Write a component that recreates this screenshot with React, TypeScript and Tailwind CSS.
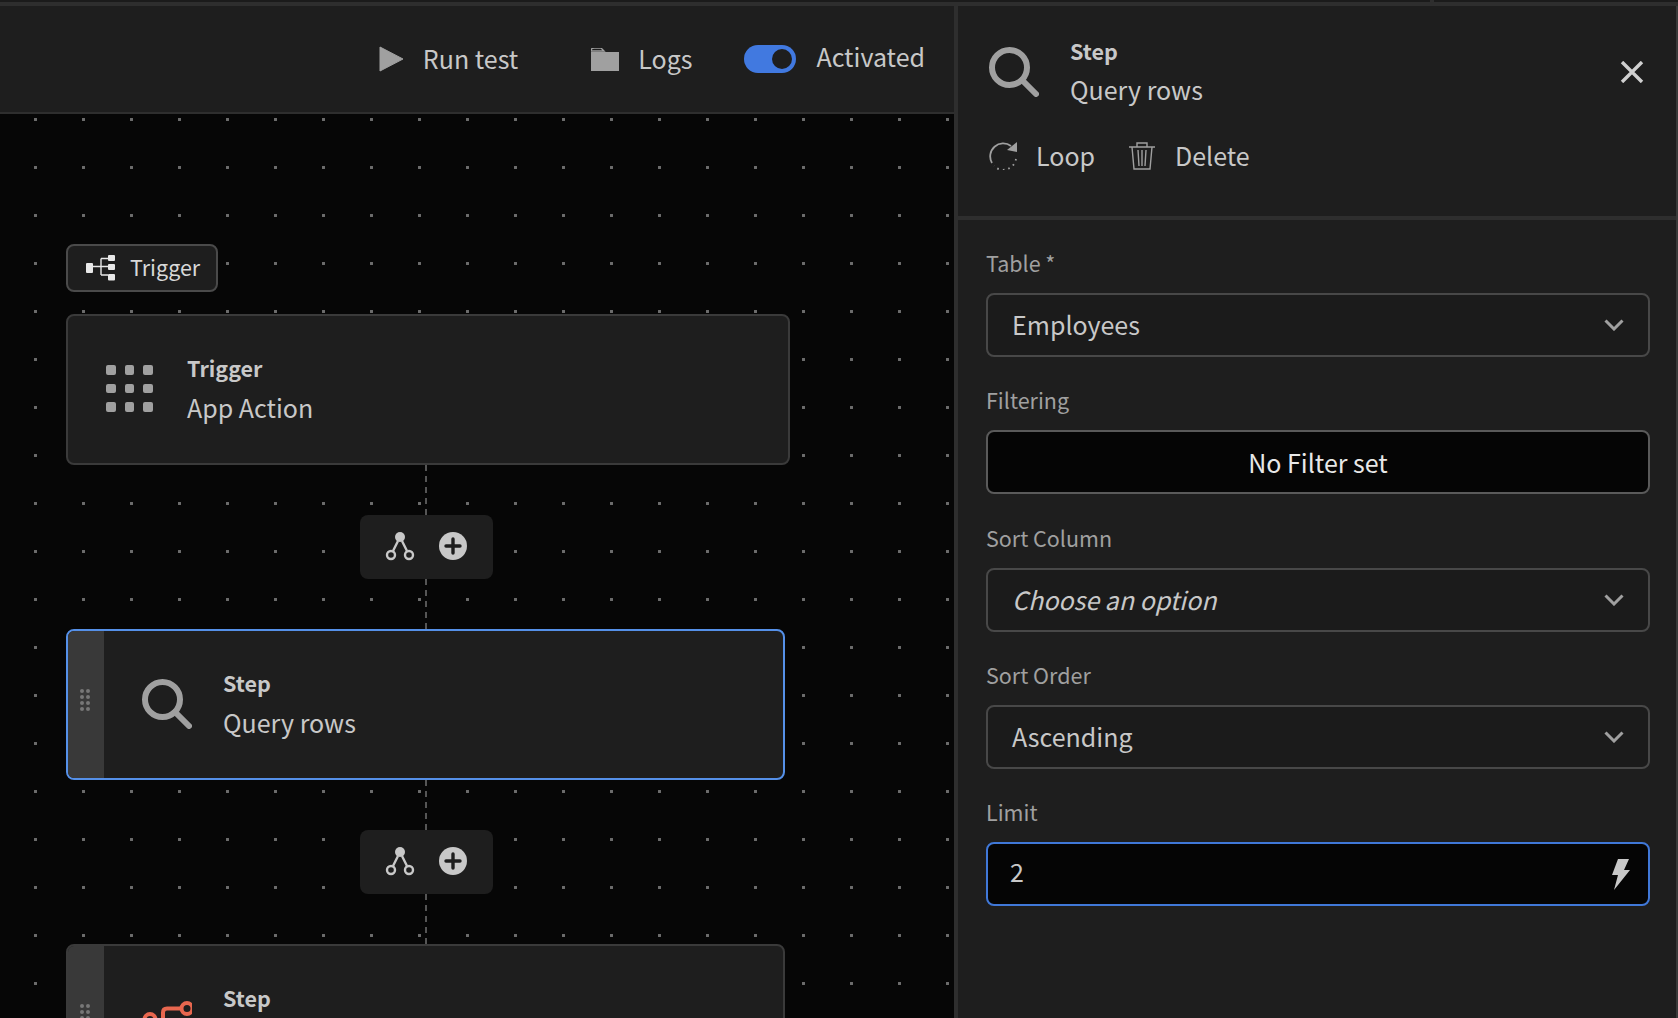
import type { ReactNode } from "react";

function SearchIcon({ className }: { className?: string }) {
  return (
    <svg viewBox="0 0 50 50" className={className} fill="none" stroke="#a0a0a0" strokeLinecap="round">
      <circle cx="20.5" cy="20.5" r="17.5" strokeWidth="6" />
      <path d="M33 33 L47 47" strokeWidth="6" />
    </svg>
  );
}

function BranchIcon() {
  return (
    <svg viewBox="0 0 30 30" className="h-[30px] w-[30px]" fill="none" stroke="#c8c8c8" strokeWidth="2.4">
      <circle cx="15" cy="6" r="5" fill="#c8c8c8" stroke="none" />
      <circle cx="6" cy="24" r="4" />
      <circle cx="24" cy="24" r="4" />
      <path d="M13 10 L8 20 M17 10 L22 20" />
    </svg>
  );
}

function PlusIcon() {
  return (
    <svg viewBox="0 0 28 28" className="h-7 w-7">
      <circle cx="14" cy="14" r="14" fill="#c8c8c8" />
      <path d="M14 7 V21 M7 14 H21" stroke="#1e1e1e" strokeWidth="3.4" strokeLinecap="round" />
    </svg>
  );
}

function Chevron() {
  return (
    <svg viewBox="0 0 20 12" className="h-3 w-5" fill="none" stroke="#a0a0a0" strokeWidth="3">
      <path d="M1.5 1.5 L10 10 L18.5 1.5" />
    </svg>
  );
}

function Grip() {
  return (
    <div className="grid -translate-x-[1px] -translate-y-[5px] grid-cols-2 gap-x-[2px] gap-y-[2px]">
      {Array.from({ length: 8 }).map((_, i) => (
        <span key={i} className="h-1 w-1 rounded-full bg-[#777777]" />
      ))}
    </div>
  );
}

function Connector() {
  return (
    <div className="flex h-[164px] w-[719px] shrink-0 flex-col items-center">
      <div className="h-[50px] w-[2px] bg-[repeating-linear-gradient(to_bottom,#555555_0,#555555_6px,transparent_6px,transparent_11px)]" />
      <div className="flex h-16 w-[133px] translate-x-[1px] items-center justify-center gap-6 rounded-lg bg-[#1e1e1e] pr-[2px] pb-[2px]">
        <BranchIcon />
        <PlusIcon />
      </div>
      <div className="h-[50px] w-[2px] bg-[repeating-linear-gradient(to_bottom,#555555_0,#555555_6px,transparent_6px,transparent_11px)]" />
    </div>
  );
}

function StepCard({
  icon,
  title,
  subtitle,
  selected,
}: {
  icon: ReactNode;
  title: string;
  subtitle?: string;
  selected?: boolean;
}) {
  return (
    <div
      className={
        selected
          ? "flex h-[151px] w-[719px] shrink-0 overflow-hidden rounded-lg border-2 border-[#5590e8] bg-[#1e1e1e]"
          : "flex h-[151px] w-[719px] shrink-0 overflow-hidden rounded-lg border-2 border-[#3a3a3a] bg-[#1e1e1e]"
      }
    >
      <div className="flex w-9 shrink-0 items-center justify-center bg-[#393939]">
        <Grip />
      </div>
      <div className="flex items-center gap-[31px] pl-[38px]">
        <div className="flex w-[50px] -translate-y-[1px] justify-center">{icon}</div>
        <div className="flex -translate-y-[2px] flex-col gap-[7px] text-[#c8c8c8]">
          <span className="text-[21.5px] leading-8 font-bold">{title}</span>
          <span className="h-8 text-[25px] leading-8">{subtitle}</span>
        </div>
      </div>
    </div>
  );
}

function Field({ label, children }: { label: string; children: ReactNode }) {
  return (
    <div className="flex flex-col">
      <span className="mb-[14px] text-[21.5px] leading-8 text-[#a0a0a0]">{label}</span>
      {children}
    </div>
  );
}

function Select({ value, italic }: { value: string; italic?: boolean }) {
  return (
    <div className="flex h-16 items-center justify-between rounded-lg border-2 border-[#484848] bg-[#1b1b1b] pr-6 pl-6 text-[25px] text-[#c8c8c8]">
      <span className={italic ? "italic" : ""}>{value}</span>
      <Chevron />
    </div>
  );
}

export default function App() {
  return (
    <div className="flex h-[1018px] w-[1678px] flex-col overflow-hidden bg-[#1e1e1e] font-['Noto_Sans_CJK_SC','Source_Sans_Pro',sans-serif]">
      <div className="flex h-[2px] shrink-0 bg-[#1b1b1b]">
        <div className="ml-[1430px] w-1 bg-[#2e2e2e]" />
      </div>
      <div className="h-1 shrink-0 bg-[#2e2e2e]" />
      <div className="flex min-h-0 flex-1">
        <main className="flex min-w-0 flex-1 flex-col">
          <header className="flex h-[108px] shrink-0 items-center justify-end border-b-2 border-[#2e2e2e] pr-[29px] text-[25px] text-[#c8c8c8]">
            <div className="flex items-center gap-[19px]">
              <svg viewBox="0 0 25 26" className="h-[26px] w-[25px]">
                <path d="M1 1 L24 13 L1 25 Z" fill="#a0a0a0" stroke="#a0a0a0" strokeLinejoin="round" />
              </svg>
              <span>Run test</span>
            </div>
            <div className="ml-[73px] flex items-center gap-[19px]">
              <svg viewBox="0 0 28 23" className="h-[23px] w-7">
                <path d="M0 3 Q0 0 3 0 H10 L13 3 H0 Z" fill="none" stroke="#a0a0a0" strokeWidth="1.4" />
                <path d="M0 4 H28 V23 H0 Z" fill="#a0a0a0" />
              </svg>
              <span>Logs</span>
            </div>
            <div className="ml-[52px] flex items-center gap-5">
              <div className="flex h-7 w-[52px] items-center justify-end rounded-full bg-[#4179e0] pr-1">
                <span className="h-5 w-5 rounded-full bg-[#1e1e1e]" />
              </div>
              <span className="-translate-y-[2px]">Activated</span>
            </div>
          </header>
          <div className="flex min-h-0 flex-1 flex-col items-start overflow-hidden bg-[#060606] bg-[radial-gradient(circle_at_1.5px_1.5px,#6c6c6c_1.4px,transparent_2px)] bg-[length:48px_48px] bg-[position:34px_4px] pt-[130px] pl-[66px]">
            <div className="flex h-12 w-[152px] shrink-0 items-center gap-[15px] rounded-lg border-2 border-[#4a4a4a] bg-[#1e1e1e] pl-[17px] text-[21.5px] text-[#d8d8d8]">
              <svg viewBox="0 0 30 26" className="h-[26px] w-[30px]">
                <rect x="1" y="8" width="7" height="10" rx="1" fill="#e8e8e8" />
                <path d="M8 11.5 H23 M16 3.5 V20 M16 3.5 H23 M16 20 H23" stroke="#e8e8e8" strokeWidth="1.4" fill="none" />
                <rect x="23" y="0" width="7" height="6" rx="1" fill="#e8e8e8" />
                <rect x="23" y="9" width="7" height="6" rx="1" fill="#e8e8e8" />
                <rect x="23" y="19" width="7" height="6.5" rx="1" fill="#e8e8e8" />
              </svg>
              <span className="-translate-y-[1px]">Trigger</span>
            </div>
            <div className="mt-[22px] flex h-[151px] w-[724px] shrink-0 items-center gap-[34.5px] rounded-lg border-2 border-[#3a3a3a] bg-[#1e1e1e] pl-[38px]">
              <div className="grid -translate-y-[1px] grid-cols-3 gap-[9px]">
                {Array.from({ length: 9 }).map((_, i) => (
                  <span key={i} className="h-[9.5px] w-[9.5px] rounded-[2px] bg-[#a0a0a0]" />
                ))}
              </div>
              <div className="flex -translate-y-[2px] flex-col gap-[7px] text-[#c8c8c8]">
                <span className="text-[21.5px] leading-8 font-bold">Trigger</span>
                <span className="text-[25px] leading-8">App Action</span>
              </div>
            </div>
            <Connector />
            <StepCard selected title="Step" subtitle="Query rows" icon={<SearchIcon className="h-[50px] w-[50px]" />} />
            <Connector />
            <StepCard
              title="Step"
              icon={
                <svg viewBox="0 0 50 50" className="h-[50px] w-[50px]" fill="none" stroke="#e8674f" strokeWidth="4">
                  <circle cx="45" cy="14.5" r="5.5" />
                  <circle cx="8" cy="25.5" r="5.5" />
                  <path d="M39.5 14.5 H25 Q21 14.5 21 18.5 V34" />
                </svg>
              }
            />
          </div>
        </main>
        <aside className="flex w-[724px] shrink-0 flex-col border-r-2 border-l-4 border-[#2e2e2e] border-r-[#3a3a3a]">
          <div className="h-[214px] shrink-0 border-b-4 border-[#2e2e2e] pt-[41px] pr-8 pl-[31px] text-[#c8c8c8]">
            <div className="flex items-start">
              <SearchIcon className="h-[50px] w-[50px]" />
              <div className="ml-[31px] flex -translate-y-[12px] flex-col gap-[6px]">
                <span className="text-[21.5px] leading-8 font-bold">Step</span>
                <span className="text-[25px] leading-8">Query rows</span>
              </div>
              <svg viewBox="0 0 24 22" className="mt-[14px] ml-auto h-[22px] w-6" fill="none" stroke="#d0d0d0" strokeWidth="3.4">
                <path d="M2 1 L22 21 M22 1 L2 21" />
              </svg>
            </div>
            <div className="mt-5 flex items-center text-[25px]">
              <svg viewBox="0 0 29 28" className="h-7 w-[29px]" fill="none" stroke="#a0a0a0" strokeWidth="1.8">
                <path d="M3 21 A13 13 0 0 1 22 4" />
                <path d="M28 0 L28 10 L18 8 Z" fill="#a0a0a0" stroke="none" />
                <path d="M27 17 A13 13 0 0 1 5 24" strokeDasharray="1.6 4" />
              </svg>
              <span className="ml-[18px]">Loop</span>
              <svg viewBox="0 0 26 28" className="ml-[34px] h-7 w-[26px]" fill="none" stroke="#a0a0a0" strokeWidth="1.4">
                <path d="M0 5 H26 M8 5 V1 H18 V5 M3 5 L5 27 H21 L23 5 M9 8 L10 24 M13 8 V24 M17 8 L16 24" />
              </svg>
              <span className="ml-5">Delete</span>
            </div>
          </div>
          <div className="flex flex-col gap-[27.3px] pt-[27px] pr-[26px] pl-[28px]">
            <Field label="Table *">
              <Select value="Employees" />
            </Field>
            <Field label="Filtering">
              <div className="flex h-16 items-center justify-center rounded-lg border-2 border-[#5a5a5a] bg-[#050505] text-[25px] text-[#e8e8e8]">
                No Filter set
              </div>
            </Field>
            <Field label="Sort Column">
              <Select value="Choose an option" italic />
            </Field>
            <Field label="Sort Order">
              <Select value="Ascending" />
            </Field>
            <Field label="Limit">
              <div className="flex h-16 items-center justify-between rounded-lg border-2 border-[#4078d8] bg-[#050505] pr-[18px] pl-[22px] text-[25px] text-[#c8c8c8]">
                <span className="-translate-y-[2px]">2</span>
                <svg viewBox="0 0 18 31" className="h-[31px] w-[18px]">
                  <path d="M6 0 H17 L12 11 H18 L2 31 L6 16 H0 Z" fill="#c8c8c8" />
                </svg>
              </div>
            </Field>
          </div>
        </aside>
      </div>
    </div>
  );
}
